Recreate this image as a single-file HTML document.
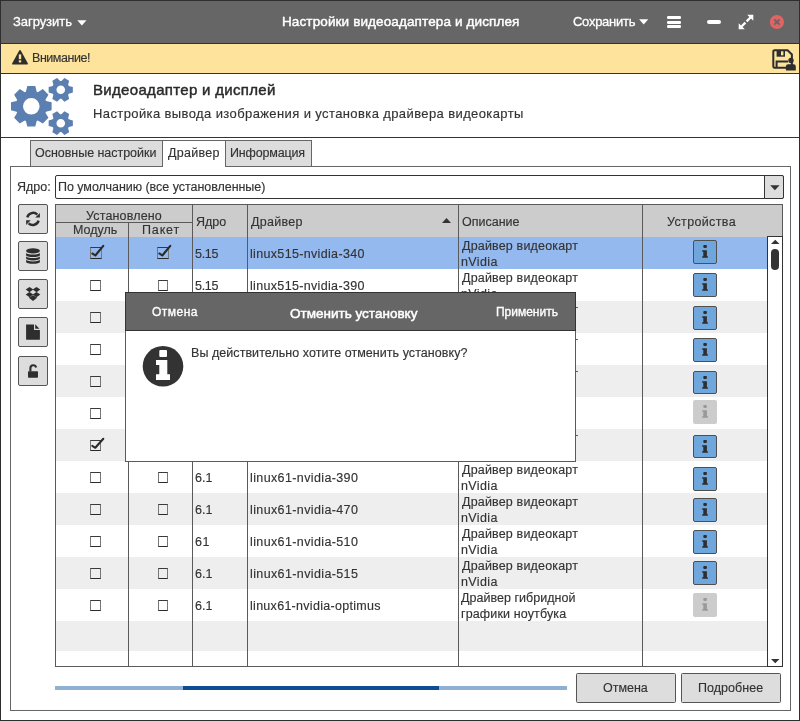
<!DOCTYPE html>
<html><head><meta charset="utf-8"><style>
html,body{margin:0;padding:0;width:800px;height:721px;overflow:hidden;background:#fff;}
body{position:relative;font-family:"Liberation Sans", sans-serif;}
body>div,body>svg{position:absolute;box-sizing:border-box;}
.t{white-space:nowrap;line-height:16px;height:16px;will-change:transform;-webkit-text-stroke:0.15px currentColor;}
</style></head><body>
<div style="left:0px;top:0px;width:800px;height:43px;background:#666666;"></div>
<div class="t" style="left:12.80px;top:13.80px;font-size:13px;color:#fff;letter-spacing:-0.057px;-webkit-text-stroke:0.3px #fff;">Загрузить</div>
<svg style="left:77px;top:19.5px" width="11" height="7"><path d="M0.3 0.3 L9.5 0.3 L4.9 5.6 Z" fill="#fff"/></svg>
<div class="t" style="left:282.00px;top:13.82px;font-size:13.5px;color:#fff;letter-spacing:0.121px;-webkit-text-stroke:0.45px #fff;">Настройки видеоадаптера и дисплея</div>
<div class="t" style="left:573.00px;top:14.00px;font-size:13px;color:#fff;letter-spacing:-0.275px;-webkit-text-stroke:0.3px #fff;">Сохранить</div>
<svg style="left:639px;top:18.8px" width="11" height="7"><path d="M0.1 0.3 L9.3 0.3 L4.7 5.5 Z" fill="#fff"/></svg>
<div style="left:666.9px;top:16.1px;width:14.2px;height:2.75px;background:#fff;border-radius:1.2px;"></div>
<div style="left:666.9px;top:20.9px;width:14.2px;height:2.75px;background:#fff;border-radius:1.2px;"></div>
<div style="left:666.9px;top:25.3px;width:14.2px;height:2.75px;background:#fff;border-radius:1.2px;"></div>
<div style="left:707.4px;top:20px;width:13.2px;height:4px;background:#fff;border-radius:2px;"></div>
<svg style="left:738px;top:14px" width="16" height="16" viewBox="0 0 16 16">
<path d="M9.2 0.7 H15.3 V6.8 Z M0.7 9.2 V15.3 H6.8 Z" fill="#fff"/>
<path d="M3 13 L7.4 8.6 M8.6 7.4 L13 3" stroke="#fff" stroke-width="2.3"/></svg>
<svg style="left:769px;top:14px" width="16" height="16" viewBox="0 0 16 16">
<circle cx="7.9" cy="8" r="7.1" fill="#e06464"/>
<path d="M5.2 5.3 L10.6 10.7 M10.6 5.3 L5.2 10.7" stroke="#666" stroke-width="1.9"/></svg>
<div style="left:0px;top:43px;width:800px;height:1px;background:#333333;"></div>
<div style="left:0px;top:44px;width:800px;height:29px;background:#fde39c;"></div>
<div style="left:0px;top:73px;width:800px;height:1px;background:#333333;"></div>
<svg style="left:11px;top:49px" width="18" height="17" viewBox="0 0 18 17">
<path d="M9 2 L16 14.7 L2 14.7 Z" fill="#2e2e2e" stroke="#2e2e2e" stroke-width="1.8" stroke-linejoin="round"/>
<rect x="7.8" y="5.4" width="2.4" height="4.8" fill="#fde39c"/><rect x="7.8" y="11.3" width="2.4" height="2.1" fill="#fde39c"/></svg>
<div class="t" style="left:31.50px;top:49.87px;font-size:12.5px;color:#333;letter-spacing:-0.460px;">Внимание!</div>
<svg style="left:772px;top:48px" width="26" height="24" viewBox="0 0 26 24">
<path d="M2.6 2.2 H15.6 L19.9 6.5 V18.2 A1.2 1.2 0 0 1 18.7 19.8 H2.6 A1.3 1.3 0 0 1 1.3 18.5 V3.5 A1.3 1.3 0 0 1 2.6 2.2 Z" fill="none" stroke="#2e2e2e" stroke-width="2"/>
<rect x="4.6" y="2" width="8.4" height="6.7" fill="#2e2e2e"/><rect x="9" y="3.3" width="2.4" height="4" fill="#fde39c"/>
<path d="M4.6 20 V13.6 H16" fill="none" stroke="#2e2e2e" stroke-width="2"/>
<circle cx="19" cy="12.5" r="2.7" fill="#2e2e2e"/>
<path d="M13.9 22.6 V18.5 A2.2 2.2 0 0 1 16.1 16.3 H21.6 A2.2 2.2 0 0 1 23.8 18.5 V22.6 Z" fill="#2e2e2e"/></svg>
<svg style="left:0;top:0" width="90" height="137" viewBox="0 0 90 137"><path d="M45.94 100.90 L51.61 102.30 L51.61 110.30 L45.94 111.70 A15.6 15.6 0 0 1 45.47 112.83 L48.49 117.83 L42.83 123.49 L37.83 120.47 A15.6 15.6 0 0 1 36.70 120.94 L35.30 126.61 L27.30 126.61 L25.90 120.94 A15.6 15.6 0 0 1 24.77 120.47 L19.77 123.49 L14.11 117.83 L17.13 112.83 A15.6 15.6 0 0 1 16.66 111.70 L10.99 110.30 L10.99 102.30 L16.66 100.90 A15.6 15.6 0 0 1 17.13 99.77 L14.11 94.77 L19.77 89.11 L24.77 92.13 A15.6 15.6 0 0 1 25.90 91.66 L27.30 85.99 L35.30 85.99 L36.70 91.66 A15.6 15.6 0 0 1 37.83 92.13 L42.83 89.11 L48.49 94.77 L45.47 99.77 A15.6 15.6 0 0 1 45.94 100.90 Z M23.00 106.30 A8.3 8.3 0 1 0 39.60 106.30 A8.3 8.3 0 1 0 23.00 106.30 Z M68.75 85.90 L72.85 87.10 L72.85 92.50 L68.75 93.70 A8.9 8.9 0 0 1 68.13 94.78 L69.14 98.93 L64.46 101.63 L61.37 98.68 A8.9 8.9 0 0 1 60.13 98.68 L57.04 101.63 L52.36 98.93 L53.37 94.78 A8.9 8.9 0 0 1 52.75 93.70 L48.65 92.50 L48.65 87.10 L52.75 85.90 A8.9 8.9 0 0 1 53.37 84.82 L52.36 80.67 L57.04 77.97 L60.13 80.92 A8.9 8.9 0 0 1 61.37 80.92 L64.46 77.97 L69.14 80.67 L68.13 84.82 A8.9 8.9 0 0 1 68.75 85.90 Z M56.45 89.80 A4.3 4.3 0 1 0 65.05 89.80 A4.3 4.3 0 1 0 56.45 89.80 Z M68.75 119.30 L72.85 120.50 L72.85 125.90 L68.75 127.10 A8.9 8.9 0 0 1 68.13 128.18 L69.14 132.33 L64.46 135.03 L61.37 132.08 A8.9 8.9 0 0 1 60.13 132.08 L57.04 135.03 L52.36 132.33 L53.37 128.18 A8.9 8.9 0 0 1 52.75 127.10 L48.65 125.90 L48.65 120.50 L52.75 119.30 A8.9 8.9 0 0 1 53.37 118.22 L52.36 114.07 L57.04 111.37 L60.13 114.32 A8.9 8.9 0 0 1 61.37 114.32 L64.46 111.37 L69.14 114.07 L68.13 118.22 A8.9 8.9 0 0 1 68.75 119.30 Z M56.45 123.20 A4.3 4.3 0 1 0 65.05 123.20 A4.3 4.3 0 1 0 56.45 123.20 Z" fill="#5a7fb0" fill-rule="evenodd"/></svg>
<div class="t" style="left:92.80px;top:82.30px;font-size:15px;color:#2a2a2a;letter-spacing:0.319px;-webkit-text-stroke:0.45px #2a2a2a;">Видеоадаптер и дисплей</div>
<div class="t" style="left:92.80px;top:105.50px;font-size:13px;color:#333;letter-spacing:0.394px;">Настройка вывода изображения и установка драйвера видеокарты</div>
<div style="left:0px;top:137px;width:800px;height:1px;background:#333333;"></div>
<div style="left:10px;top:166px;width:781px;height:545px;border:1px solid #666666;"></div>
<div style="left:30px;top:140px;width:133px;height:27px;background:#dddddd;border:1px solid #666666;"></div>
<div style="left:225px;top:140px;width:87px;height:27px;background:#dddddd;border:1px solid #666666;"></div>
<div style="left:162px;top:140px;width:64px;height:27px;background:#ffffff;border:1px solid #666666;border-bottom:none;"></div>
<div class="t" style="left:35.30px;top:144.87px;font-size:12.5px;color:#333;letter-spacing:-0.032px;">Основные настройки</div>
<div class="t" style="left:167.60px;top:144.87px;font-size:12.5px;color:#333;letter-spacing:0.274px;">Драйвер</div>
<div class="t" style="left:230.30px;top:144.87px;font-size:12.5px;color:#333;letter-spacing:-0.170px;">Информация</div>
<div class="t" style="left:16.50px;top:178.57px;font-size:12.5px;color:#333;">Ядро:</div>
<div style="left:55px;top:175px;width:729px;height:24px;background:#fff;border:1px solid #333333;border-radius:2px;"></div>
<div style="left:764px;top:175px;width:20px;height:24px;background:#dddddd;border:1px solid #333333;border-radius:0 2px 2px 0;"></div>
<svg style="left:769.6px;top:184.6px" width="11" height="7"><path d="M0.2 0.2 L9.6 0.2 L4.9 5.3 Z" fill="#333"/></svg>
<div class="t" style="left:58.20px;top:178.57px;font-size:12.5px;color:#333;letter-spacing:-0.039px;">По умолчанию (все установленные)</div>
<div style="left:18px;top:204px;width:30px;height:30px;background:#dddddd;border:1px solid #555;border-radius:2px;"></div>
<div style="left:18px;top:241px;width:30px;height:30px;background:#dddddd;border:1px solid #555;border-radius:2px;"></div>
<div style="left:18px;top:279px;width:30px;height:30px;background:#dddddd;border:1px solid #555;border-radius:2px;"></div>
<div style="left:18px;top:317px;width:30px;height:30px;background:#dddddd;border:1px solid #555;border-radius:2px;"></div>
<div style="left:18px;top:356px;width:30px;height:30px;background:#dddddd;border:1px solid #555;border-radius:2px;"></div>
<svg style="left:18px;top:204px" width="30" height="30" viewBox="0 0 30 30">
<path d="M9.3 13.3 A6 6 0 0 1 19.3 10.6" fill="none" stroke="#2e2e2e" stroke-width="2.5"/>
<path d="M21.9 9 V13.6 H17.3 Z" fill="#2e2e2e"/>
<path d="M20.6 16.6 A6 6 0 0 1 10.6 19.3" fill="none" stroke="#2e2e2e" stroke-width="2.5"/>
<path d="M8.1 20.9 V16.3 H12.7 Z" fill="#2e2e2e"/></svg>
<svg style="left:18px;top:241px" width="30" height="30" viewBox="0 0 30 30">
<ellipse cx="15" cy="9.9" rx="6.9" ry="2.6" fill="#2e2e2e"/>
<path d="M8.1 11.8 A6.9 1.8 0 0 0 21.9 11.8 V14.2 A6.9 1.8 0 0 1 8.1 14.2 Z" fill="#2e2e2e"/>
<path d="M8.1 15.2 A6.9 1.8 0 0 0 21.9 15.2 V17.6 A6.9 1.8 0 0 1 8.1 17.6 Z" fill="#2e2e2e"/>
<path d="M8.1 18.6 A6.9 1.8 0 0 0 21.9 18.6 V21 A6.9 1.8 0 0 1 8.1 21 Z" fill="#2e2e2e"/></svg>
<svg style="left:18px;top:279px" width="30" height="30" viewBox="0 0 30 30">
<path d="M11.5 7.9 L15.3 10.5 L11.5 13.2 L7.7 10.6 Z M18.5 7.9 L22.3 10.6 L18.5 13.2 L14.7 10.5 Z M7.7 15.6 L11.5 13.1 L15.3 15.6 L11.5 18.2 Z M14.7 15.6 L18.5 13.1 L22.3 15.6 L18.5 18.2 Z M10.9 18.7 L15 16.2 L19.1 18.7 L15 22.1 Z" fill="#2e2e2e"/></svg>
<svg style="left:18px;top:317px" width="30" height="30" viewBox="0 0 30 30">
<path d="M8.1 7.6 H16 V13.1 H21.9 V22.2 A0.6 0.6 0 0 1 21.3 22.8 H8.7 A0.6 0.6 0 0 1 8.1 22.2 Z" fill="#2e2e2e"/>
<path d="M17.2 7.3 L21.5 11.8 H17.2 Z" fill="#2e2e2e"/></svg>
<svg style="left:18px;top:356px" width="30" height="30" viewBox="0 0 30 30">
<path d="M12.4 15.5 V11.8 A2.9 2.9 0 0 1 18.1 11.4" fill="none" stroke="#2e2e2e" stroke-width="2.1"/>
<rect x="10" y="15.2" width="10" height="6.5" rx="0.8" fill="#2e2e2e"/></svg>
<div style="left:55px;top:204px;width:728px;height:463px;border:1px solid #5a5a5a;background:#fff;"></div>
<div style="left:56px;top:205px;width:726px;height:32px;background:#cccccc;"></div>
<div style="left:56px;top:237px;width:711px;height:32px;background:#94b9ef;"></div>
<div style="left:56px;top:301px;width:711px;height:32px;background:#eeeeee;"></div>
<div style="left:56px;top:365px;width:711px;height:32px;background:#eeeeee;"></div>
<div style="left:56px;top:429px;width:711px;height:32px;background:#eeeeee;"></div>
<div style="left:56px;top:493px;width:711px;height:32px;background:#eeeeee;"></div>
<div style="left:56px;top:557px;width:711px;height:32px;background:#eeeeee;"></div>
<div style="left:56px;top:621px;width:711px;height:30px;background:#eeeeee;"></div>
<div style="left:56px;top:222px;width:136px;height:1px;background:#5a5a5a;"></div>
<div style="left:128px;top:222px;width:1px;height:444px;background:#5a5a5a;"></div>
<div style="left:192px;top:204px;width:1px;height:462px;background:#5a5a5a;"></div>
<div style="left:247px;top:204px;width:1px;height:462px;background:#5a5a5a;"></div>
<div style="left:458px;top:204px;width:1px;height:462px;background:#5a5a5a;"></div>
<div style="left:642px;top:204px;width:1px;height:462px;background:#5a5a5a;"></div>
<div class="t" style="left:86.00px;top:207.77px;font-size:12.5px;color:#333;letter-spacing:0.160px;">Установлено</div>
<div class="t" style="left:73.40px;top:221.57px;font-size:12.5px;color:#333;letter-spacing:-0.022px;">Модуль</div>
<div class="t" style="left:142.00px;top:221.57px;font-size:12.5px;color:#333;letter-spacing:0.848px;">Пакет</div>
<div class="t" style="left:195.70px;top:213.77px;font-size:12.5px;color:#333;">Ядро</div>
<div class="t" style="left:251.00px;top:213.77px;font-size:12.5px;color:#333;letter-spacing:0.274px;">Драйвер</div>
<svg style="left:441px;top:217px" width="11" height="7"><path d="M1 6.0 L10 6.0 L5.5 1 Z" fill="#333"/></svg>
<div class="t" style="left:461.80px;top:213.77px;font-size:12.5px;color:#333;">Описание</div>
<div class="t" style="left:667.40px;top:213.77px;font-size:12.5px;color:#333;letter-spacing:0.356px;">Устройства</div>
<div style="left:89.7px;top:247px;width:12.2px;height:11.8px;border:1px solid #777;border-top-color:#3a3a3a;border-bottom:1.6px solid #2a2a2a;"></div>
<svg style="left:89.7px;top:243px" width="16" height="16" viewBox="0 0 16 16"><path d="M2.3 10.49 L5.3 12.50 L13.3 2.8" fill="none" stroke="#2a2a2a" stroke-width="2.1" stroke-linejoin="round" stroke-linecap="round"/></svg>
<div style="left:157.0px;top:247px;width:12.2px;height:11.8px;border:1px solid #777;border-top-color:#3a3a3a;border-bottom:1.6px solid #2a2a2a;"></div>
<svg style="left:157.0px;top:243px" width="16" height="16" viewBox="0 0 16 16"><path d="M2.3 10.49 L5.3 12.50 L13.3 2.8" fill="none" stroke="#2a2a2a" stroke-width="2.1" stroke-linejoin="round" stroke-linecap="round"/></svg>
<div class="t" style="left:195.30px;top:246.17px;font-size:12.5px;color:#333;letter-spacing:-0.310px;">5.15</div>
<div class="t" style="left:250.30px;top:246.17px;font-size:12.5px;color:#333;letter-spacing:0.333px;">linux515-nvidia-340</div>
<div class="t" style="left:461.90px;top:237.97px;font-size:12.5px;color:#333;letter-spacing:0.172px;">Драйвер видеокарт</div>
<div class="t" style="left:461.40px;top:253.77px;font-size:12.5px;color:#333;letter-spacing:0.375px;">nVidia</div>
<div style="left:693px;top:240px;width:24px;height:23.7px;background:#6fa6dc;border:1px solid #4f4f4f;border-radius:2px;"></div>
<svg style="left:693px;top:240px" width="24" height="24" viewBox="0 0 24 24">
<rect x="10.3" y="5.1" width="3.6" height="2.8" rx="0.8" fill="#2e2e2e"/>
<path d="M9.2 10.3 H13.9 V16.3 H14.9 V17.8 H9.2 V16.3 H10.3 V11.7 H9.2 Z" fill="#2e2e2e"/></svg>
<div style="left:90.3px;top:280px;width:10.9px;height:10.8px;border:1px solid #777;border-top-color:#3a3a3a;border-bottom:1.6px solid #2a2a2a;"></div>
<div style="left:157.6px;top:280px;width:10.9px;height:10.8px;border:1px solid #777;border-top-color:#3a3a3a;border-bottom:1.6px solid #2a2a2a;"></div>
<div class="t" style="left:195.30px;top:278.17px;font-size:12.5px;color:#333;letter-spacing:-0.310px;">5.15</div>
<div class="t" style="left:250.30px;top:278.17px;font-size:12.5px;color:#333;letter-spacing:0.333px;">linux515-nvidia-390</div>
<div class="t" style="left:461.90px;top:269.97px;font-size:12.5px;color:#333;letter-spacing:0.172px;">Драйвер видеокарт</div>
<div class="t" style="left:461.40px;top:285.77px;font-size:12.5px;color:#333;letter-spacing:0.375px;">nVidia</div>
<div style="left:693px;top:273px;width:24px;height:23.7px;background:#6fa6dc;border:1px solid #4f4f4f;border-radius:2px;"></div>
<svg style="left:693px;top:273px" width="24" height="24" viewBox="0 0 24 24">
<rect x="10.3" y="5.1" width="3.6" height="2.8" rx="0.8" fill="#2e2e2e"/>
<path d="M9.2 10.3 H13.9 V16.3 H14.9 V17.8 H9.2 V16.3 H10.3 V11.7 H9.2 Z" fill="#2e2e2e"/></svg>
<div style="left:90.3px;top:312px;width:10.9px;height:10.8px;border:1px solid #777;border-top-color:#3a3a3a;border-bottom:1.6px solid #2a2a2a;"></div>
<div style="left:157.6px;top:312px;width:10.9px;height:10.8px;border:1px solid #777;border-top-color:#3a3a3a;border-bottom:1.6px solid #2a2a2a;"></div>
<div class="t" style="left:195.30px;top:310.17px;font-size:12.5px;color:#333;letter-spacing:-0.310px;">5.15</div>
<div class="t" style="left:250.30px;top:310.17px;font-size:12.5px;color:#333;letter-spacing:0.333px;">linux515-nvidia-470</div>
<div class="t" style="left:461.90px;top:301.97px;font-size:12.5px;color:#333;letter-spacing:0.172px;">Драйвер видеокарт</div>
<div class="t" style="left:461.40px;top:317.77px;font-size:12.5px;color:#333;letter-spacing:0.375px;">nVidia</div>
<div style="left:693px;top:306.2px;width:24px;height:23.7px;background:#6fa6dc;border:1px solid #4f4f4f;border-radius:2px;"></div>
<svg style="left:693px;top:306.2px" width="24" height="24" viewBox="0 0 24 24">
<rect x="10.3" y="5.1" width="3.6" height="2.8" rx="0.8" fill="#2e2e2e"/>
<path d="M9.2 10.3 H13.9 V16.3 H14.9 V17.8 H9.2 V16.3 H10.3 V11.7 H9.2 Z" fill="#2e2e2e"/></svg>
<div style="left:90.3px;top:344px;width:10.9px;height:10.8px;border:1px solid #777;border-top-color:#3a3a3a;border-bottom:1.6px solid #2a2a2a;"></div>
<div style="left:157.6px;top:344px;width:10.9px;height:10.8px;border:1px solid #777;border-top-color:#3a3a3a;border-bottom:1.6px solid #2a2a2a;"></div>
<div class="t" style="left:195.30px;top:342.17px;font-size:12.5px;color:#333;letter-spacing:-0.310px;">5.15</div>
<div class="t" style="left:250.30px;top:342.17px;font-size:12.5px;color:#333;letter-spacing:0.333px;">linux515-nvidia-510</div>
<div class="t" style="left:461.90px;top:333.97px;font-size:12.5px;color:#333;letter-spacing:0.172px;">Драйвер видеокарт</div>
<div class="t" style="left:461.40px;top:349.77px;font-size:12.5px;color:#333;letter-spacing:0.375px;">nVidia</div>
<div style="left:693px;top:338.1px;width:24px;height:23.7px;background:#6fa6dc;border:1px solid #4f4f4f;border-radius:2px;"></div>
<svg style="left:693px;top:338.1px" width="24" height="24" viewBox="0 0 24 24">
<rect x="10.3" y="5.1" width="3.6" height="2.8" rx="0.8" fill="#2e2e2e"/>
<path d="M9.2 10.3 H13.9 V16.3 H14.9 V17.8 H9.2 V16.3 H10.3 V11.7 H9.2 Z" fill="#2e2e2e"/></svg>
<div style="left:90.3px;top:376px;width:10.9px;height:10.8px;border:1px solid #777;border-top-color:#3a3a3a;border-bottom:1.6px solid #2a2a2a;"></div>
<div style="left:157.6px;top:376px;width:10.9px;height:10.8px;border:1px solid #777;border-top-color:#3a3a3a;border-bottom:1.6px solid #2a2a2a;"></div>
<div class="t" style="left:195.30px;top:374.17px;font-size:12.5px;color:#333;letter-spacing:-0.310px;">5.15</div>
<div class="t" style="left:250.30px;top:374.17px;font-size:12.5px;color:#333;letter-spacing:0.333px;">linux515-nvidia-515</div>
<div class="t" style="left:461.90px;top:365.97px;font-size:12.5px;color:#333;letter-spacing:0.172px;">Драйвер видеокарт</div>
<div class="t" style="left:461.40px;top:381.77px;font-size:12.5px;color:#333;letter-spacing:0.375px;">nVidia</div>
<div style="left:693px;top:370.7px;width:24px;height:23.7px;background:#6fa6dc;border:1px solid #4f4f4f;border-radius:2px;"></div>
<svg style="left:693px;top:370.7px" width="24" height="24" viewBox="0 0 24 24">
<rect x="10.3" y="5.1" width="3.6" height="2.8" rx="0.8" fill="#2e2e2e"/>
<path d="M9.2 10.3 H13.9 V16.3 H14.9 V17.8 H9.2 V16.3 H10.3 V11.7 H9.2 Z" fill="#2e2e2e"/></svg>
<div style="left:90.3px;top:408px;width:10.9px;height:10.8px;border:1px solid #777;border-top-color:#3a3a3a;border-bottom:1.6px solid #2a2a2a;"></div>
<div style="left:157.6px;top:408px;width:10.9px;height:10.8px;border:1px solid #777;border-top-color:#3a3a3a;border-bottom:1.6px solid #2a2a2a;"></div>
<div class="t" style="left:195.30px;top:406.17px;font-size:12.5px;color:#333;letter-spacing:-0.310px;">5.15</div>
<div class="t" style="left:250.30px;top:406.17px;font-size:12.5px;color:#333;letter-spacing:0.231px;">linux515-nvidia-optimus</div>
<div class="t" style="left:461.40px;top:397.97px;font-size:12.5px;color:#333;letter-spacing:0.025px;">Драйвер гибридной</div>
<div class="t" style="left:461.40px;top:413.77px;font-size:12.5px;color:#333;letter-spacing:0.135px;">графики ноутбука</div>
<div style="left:693px;top:400.3px;width:24px;height:23.7px;background:#cccccc;border-radius:2px;"></div>
<svg style="left:693px;top:400.3px" width="24" height="24" viewBox="0 0 24 24">
<rect x="10.3" y="5.1" width="3.6" height="2.8" rx="0.8" fill="#999999"/>
<path d="M9.2 10.3 H13.9 V16.3 H14.9 V17.8 H9.2 V16.3 H10.3 V11.7 H9.2 Z" fill="#999999"/></svg>
<div style="left:90.3px;top:440px;width:10.9px;height:10.8px;border:1px solid #777;border-top-color:#3a3a3a;border-bottom:1.6px solid #2a2a2a;"></div>
<svg style="left:90.3px;top:436px" width="16" height="16" viewBox="0 0 16 16"><path d="M2.3 9.94 L5.3 11.78 L13.3 2.8" fill="none" stroke="#2a2a2a" stroke-width="2.1" stroke-linejoin="round" stroke-linecap="round"/></svg>
<div style="left:157.6px;top:440px;width:10.9px;height:10.8px;border:1px solid #777;border-top-color:#3a3a3a;border-bottom:1.6px solid #2a2a2a;"></div>
<div class="t" style="left:195.30px;top:438.17px;font-size:12.5px;color:#333;letter-spacing:0.012px;">6.1</div>
<div class="t" style="left:250.30px;top:438.17px;font-size:12.5px;color:#333;letter-spacing:0.379px;">linux61-nvidia-340</div>
<div class="t" style="left:461.90px;top:429.97px;font-size:12.5px;color:#333;letter-spacing:0.172px;">Драйвер видеокарт</div>
<div class="t" style="left:461.40px;top:445.77px;font-size:12.5px;color:#333;letter-spacing:0.375px;">nVidia</div>
<div style="left:693px;top:434.5px;width:24px;height:23.7px;background:#6fa6dc;border:1px solid #4f4f4f;border-radius:2px;"></div>
<svg style="left:693px;top:434.5px" width="24" height="24" viewBox="0 0 24 24">
<rect x="10.3" y="5.1" width="3.6" height="2.8" rx="0.8" fill="#2e2e2e"/>
<path d="M9.2 10.3 H13.9 V16.3 H14.9 V17.8 H9.2 V16.3 H10.3 V11.7 H9.2 Z" fill="#2e2e2e"/></svg>
<div style="left:90.3px;top:472px;width:10.9px;height:10.8px;border:1px solid #777;border-top-color:#3a3a3a;border-bottom:1.6px solid #2a2a2a;"></div>
<div style="left:157.6px;top:472px;width:10.9px;height:10.8px;border:1px solid #777;border-top-color:#3a3a3a;border-bottom:1.6px solid #2a2a2a;"></div>
<div class="t" style="left:195.30px;top:470.17px;font-size:12.5px;color:#333;letter-spacing:0.012px;">6.1</div>
<div class="t" style="left:250.30px;top:470.17px;font-size:12.5px;color:#333;letter-spacing:0.379px;">linux61-nvidia-390</div>
<div class="t" style="left:461.90px;top:461.97px;font-size:12.5px;color:#333;letter-spacing:0.172px;">Драйвер видеокарт</div>
<div class="t" style="left:461.40px;top:477.77px;font-size:12.5px;color:#333;letter-spacing:0.375px;">nVidia</div>
<div style="left:693px;top:467.1px;width:24px;height:23.7px;background:#6fa6dc;border:1px solid #4f4f4f;border-radius:2px;"></div>
<svg style="left:693px;top:467.1px" width="24" height="24" viewBox="0 0 24 24">
<rect x="10.3" y="5.1" width="3.6" height="2.8" rx="0.8" fill="#2e2e2e"/>
<path d="M9.2 10.3 H13.9 V16.3 H14.9 V17.8 H9.2 V16.3 H10.3 V11.7 H9.2 Z" fill="#2e2e2e"/></svg>
<div style="left:90.3px;top:504px;width:10.9px;height:10.8px;border:1px solid #777;border-top-color:#3a3a3a;border-bottom:1.6px solid #2a2a2a;"></div>
<div style="left:157.6px;top:504px;width:10.9px;height:10.8px;border:1px solid #777;border-top-color:#3a3a3a;border-bottom:1.6px solid #2a2a2a;"></div>
<div class="t" style="left:195.30px;top:502.17px;font-size:12.5px;color:#333;letter-spacing:0.012px;">6.1</div>
<div class="t" style="left:250.30px;top:502.17px;font-size:12.5px;color:#333;letter-spacing:0.379px;">linux61-nvidia-470</div>
<div class="t" style="left:461.90px;top:493.97px;font-size:12.5px;color:#333;letter-spacing:0.172px;">Драйвер видеокарт</div>
<div class="t" style="left:461.40px;top:509.77px;font-size:12.5px;color:#333;letter-spacing:0.375px;">nVidia</div>
<div style="left:693px;top:498.3px;width:24px;height:23.7px;background:#6fa6dc;border:1px solid #4f4f4f;border-radius:2px;"></div>
<svg style="left:693px;top:498.3px" width="24" height="24" viewBox="0 0 24 24">
<rect x="10.3" y="5.1" width="3.6" height="2.8" rx="0.8" fill="#2e2e2e"/>
<path d="M9.2 10.3 H13.9 V16.3 H14.9 V17.8 H9.2 V16.3 H10.3 V11.7 H9.2 Z" fill="#2e2e2e"/></svg>
<div style="left:90.3px;top:536px;width:10.9px;height:10.8px;border:1px solid #777;border-top-color:#3a3a3a;border-bottom:1.6px solid #2a2a2a;"></div>
<div style="left:157.6px;top:536px;width:10.9px;height:10.8px;border:1px solid #777;border-top-color:#3a3a3a;border-bottom:1.6px solid #2a2a2a;"></div>
<div class="t" style="left:195.30px;top:534.17px;font-size:12.5px;color:#333;letter-spacing:0.496px;">61</div>
<div class="t" style="left:250.30px;top:534.17px;font-size:12.5px;color:#333;letter-spacing:0.379px;">linux61-nvidia-510</div>
<div class="t" style="left:461.90px;top:525.97px;font-size:12.5px;color:#333;letter-spacing:0.172px;">Драйвер видеокарт</div>
<div class="t" style="left:461.40px;top:541.77px;font-size:12.5px;color:#333;letter-spacing:0.375px;">nVidia</div>
<div style="left:693px;top:530.2px;width:24px;height:23.7px;background:#6fa6dc;border:1px solid #4f4f4f;border-radius:2px;"></div>
<svg style="left:693px;top:530.2px" width="24" height="24" viewBox="0 0 24 24">
<rect x="10.3" y="5.1" width="3.6" height="2.8" rx="0.8" fill="#2e2e2e"/>
<path d="M9.2 10.3 H13.9 V16.3 H14.9 V17.8 H9.2 V16.3 H10.3 V11.7 H9.2 Z" fill="#2e2e2e"/></svg>
<div style="left:90.3px;top:568px;width:10.9px;height:10.8px;border:1px solid #777;border-top-color:#3a3a3a;border-bottom:1.6px solid #2a2a2a;"></div>
<div style="left:157.6px;top:568px;width:10.9px;height:10.8px;border:1px solid #777;border-top-color:#3a3a3a;border-bottom:1.6px solid #2a2a2a;"></div>
<div class="t" style="left:195.30px;top:566.17px;font-size:12.5px;color:#333;letter-spacing:0.012px;">6.1</div>
<div class="t" style="left:250.30px;top:566.17px;font-size:12.5px;color:#333;letter-spacing:0.379px;">linux61-nvidia-515</div>
<div class="t" style="left:461.90px;top:557.97px;font-size:12.5px;color:#333;letter-spacing:0.172px;">Драйвер видеокарт</div>
<div class="t" style="left:461.40px;top:573.77px;font-size:12.5px;color:#333;letter-spacing:0.375px;">nVidia</div>
<div style="left:693px;top:561.4px;width:24px;height:23.7px;background:#6fa6dc;border:1px solid #4f4f4f;border-radius:2px;"></div>
<svg style="left:693px;top:561.4px" width="24" height="24" viewBox="0 0 24 24">
<rect x="10.3" y="5.1" width="3.6" height="2.8" rx="0.8" fill="#2e2e2e"/>
<path d="M9.2 10.3 H13.9 V16.3 H14.9 V17.8 H9.2 V16.3 H10.3 V11.7 H9.2 Z" fill="#2e2e2e"/></svg>
<div style="left:90.3px;top:600px;width:10.9px;height:10.8px;border:1px solid #777;border-top-color:#3a3a3a;border-bottom:1.6px solid #2a2a2a;"></div>
<div style="left:157.6px;top:600px;width:10.9px;height:10.8px;border:1px solid #777;border-top-color:#3a3a3a;border-bottom:1.6px solid #2a2a2a;"></div>
<div class="t" style="left:195.30px;top:598.17px;font-size:12.5px;color:#333;letter-spacing:0.012px;">6.1</div>
<div class="t" style="left:250.30px;top:598.17px;font-size:12.5px;color:#333;letter-spacing:0.287px;">linux61-nvidia-optimus</div>
<div class="t" style="left:461.40px;top:589.97px;font-size:12.5px;color:#333;letter-spacing:0.025px;">Драйвер гибридной</div>
<div class="t" style="left:461.40px;top:605.77px;font-size:12.5px;color:#333;letter-spacing:0.135px;">графики ноутбука</div>
<div style="left:693px;top:593px;width:24px;height:23.7px;background:#cccccc;border-radius:2px;"></div>
<svg style="left:693px;top:593px" width="24" height="24" viewBox="0 0 24 24">
<rect x="10.3" y="5.1" width="3.6" height="2.8" rx="0.8" fill="#999999"/>
<path d="M9.2 10.3 H13.9 V16.3 H14.9 V17.8 H9.2 V16.3 H10.3 V11.7 H9.2 Z" fill="#999999"/></svg>
<div style="left:767px;top:236px;width:16px;height:431px;background:#fff;border:1px solid #333333;"></div>
<svg style="left:770px;top:239px" width="11" height="6"><path d="M1 5 L9.5 5 L5.25 0.8 Z" fill="#333"/></svg>
<div style="left:771px;top:249px;width:8px;height:21px;background:#333;border-radius:4px;"></div>
<svg style="left:770px;top:658px" width="11" height="6"><path d="M1 1 L9.5 1 L5.25 5.2 Z" fill="#333"/></svg>
<div style="left:55px;top:686px;width:512px;height:4px;background:#8fb0d2;"></div>
<div style="left:183px;top:686px;width:256px;height:4px;background:#0b4e94;"></div>
<div style="left:576px;top:673px;width:100px;height:30px;background:#dddddd;border:1px solid #555;border-radius:1.5px;"></div>
<div style="left:681px;top:673px;width:100px;height:30px;background:#dddddd;border:1px solid #555;border-radius:1.5px;"></div>
<div class="t" style="left:603.30px;top:679.57px;font-size:12.5px;color:#333;letter-spacing:-0.010px;">Отмена</div>
<div class="t" style="left:697.70px;top:679.57px;font-size:12.5px;color:#333;letter-spacing:0.047px;">Подробнее</div>
<div style="left:125px;top:292px;width:451px;height:170px;background:#fff;border:1px solid #5a5a5a;"></div>
<div style="left:125px;top:292px;width:451px;height:39px;background:#666666;border:1px solid #333333;"></div>
<div class="t" style="left:152.00px;top:303.94px;font-size:12px;color:#fff;letter-spacing:0.469px;-webkit-text-stroke:0.35px #fff;">Отмена</div>
<div class="t" style="left:289.90px;top:305.72px;font-size:13.5px;color:#fff;letter-spacing:0.008px;-webkit-text-stroke:0.5px #fff;">Отменить установку</div>
<div class="t" style="left:495.50px;top:303.84px;font-size:12px;color:#fff;letter-spacing:-0.013px;-webkit-text-stroke:0.35px #fff;">Применить</div>
<svg style="left:140px;top:343px" width="48" height="48" viewBox="0 0 48 48">
<circle cx="23" cy="23.3" r="20.3" fill="#333"/>
<rect x="19.3" y="7" width="7.7" height="7" rx="1" fill="#fff"/>
<path d="M16 17 H27.3 V31.3 H30 V37 H16 V31.3 H19.3 V22 H16 Z" fill="#fff"/></svg>
<div class="t" style="left:191.20px;top:344.77px;font-size:12.5px;color:#333;letter-spacing:0.054px;">Вы действительно хотите отменить установку?</div>
<div style="left:0;top:0;width:800px;height:721px;border:1px solid #2e2e2e;"></div>
</body></html>
